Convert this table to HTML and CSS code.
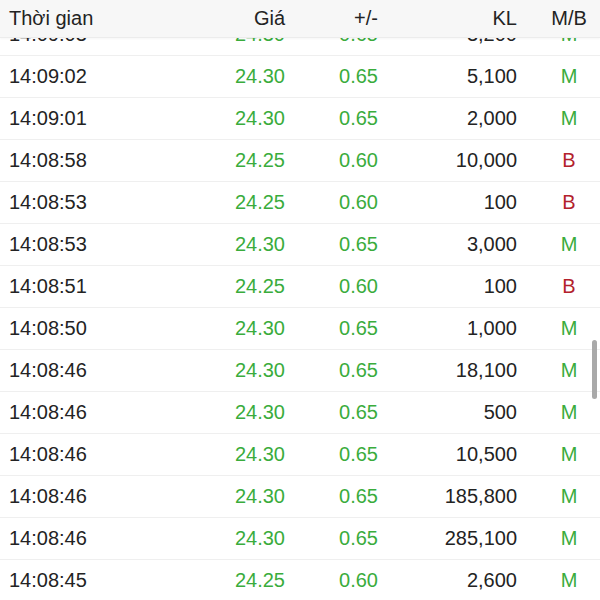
FILE: index.html
```html
<!DOCTYPE html>
<html lang="vi">
<head>
<meta charset="utf-8">
<link rel="stylesheet" href="styles.css">
</head>
<body>
<div class="table">
  <div class="header">
    <div class="c1">Thời gian</div>
    <div class="c2">Giá</div>
    <div class="c3">+/-</div>
    <div class="c4">KL</div>
    <div class="c5">M/B</div>
  </div>
  <div class="rows">
    <div class="row"><div class="c1">14:09:03</div><div class="c2 up">24.30</div><div class="c3 up">0.65</div><div class="c4">3,200</div><div class="c5 up">M</div></div>
    <div class="row"><div class="c1">14:09:02</div><div class="c2 up">24.30</div><div class="c3 up">0.65</div><div class="c4">5,100</div><div class="c5 up">M</div></div>
    <div class="row"><div class="c1">14:09:01</div><div class="c2 up">24.30</div><div class="c3 up">0.65</div><div class="c4">2,000</div><div class="c5 up">M</div></div>
    <div class="row"><div class="c1">14:08:58</div><div class="c2 up">24.25</div><div class="c3 up">0.60</div><div class="c4">10,000</div><div class="c5 down">B</div></div>
    <div class="row"><div class="c1">14:08:53</div><div class="c2 up">24.25</div><div class="c3 up">0.60</div><div class="c4">100</div><div class="c5 down">B</div></div>
    <div class="row"><div class="c1">14:08:53</div><div class="c2 up">24.30</div><div class="c3 up">0.65</div><div class="c4">3,000</div><div class="c5 up">M</div></div>
    <div class="row"><div class="c1">14:08:51</div><div class="c2 up">24.25</div><div class="c3 up">0.60</div><div class="c4">100</div><div class="c5 down">B</div></div>
    <div class="row"><div class="c1">14:08:50</div><div class="c2 up">24.30</div><div class="c3 up">0.65</div><div class="c4">1,000</div><div class="c5 up">M</div></div>
    <div class="row"><div class="c1">14:08:46</div><div class="c2 up">24.30</div><div class="c3 up">0.65</div><div class="c4">18,100</div><div class="c5 up">M</div></div>
    <div class="row"><div class="c1">14:08:46</div><div class="c2 up">24.30</div><div class="c3 up">0.65</div><div class="c4">500</div><div class="c5 up">M</div></div>
    <div class="row"><div class="c1">14:08:46</div><div class="c2 up">24.30</div><div class="c3 up">0.65</div><div class="c4">10,500</div><div class="c5 up">M</div></div>
    <div class="row"><div class="c1">14:08:46</div><div class="c2 up">24.30</div><div class="c3 up">0.65</div><div class="c4">185,800</div><div class="c5 up">M</div></div>
    <div class="row"><div class="c1">14:08:46</div><div class="c2 up">24.30</div><div class="c3 up">0.65</div><div class="c4">285,100</div><div class="c5 up">M</div></div>
    <div class="row"><div class="c1">14:08:45</div><div class="c2 up">24.25</div><div class="c3 up">0.60</div><div class="c4">2,600</div><div class="c5 up">M</div></div>
  </div>
  <div class="scrollbar"></div>
</div>
</body>
</html>
```
FILE: styles.css
```css
html, body {
  margin: 0;
  padding: 0;
  background: #ffffff;
}
body {
  width: 600px;
  height: 600px;
  overflow: hidden;
  font-family: "Liberation Sans", Arial, sans-serif;
  font-size: 20px;
  color: #232323;
}
.table {
  position: relative;
  width: 600px;
  height: 600px;
  overflow: hidden;
}
.header,
.row {
  display: grid;
  grid-template-columns: 191px 85px 93px 139px 1fr;
  align-items: center;
  padding-left: 9px;
}
.header {
  position: absolute;
  top: 0;
  left: 0;
  right: 0;
  height: 37px;
  background: #f7f7f7;
  border-bottom: 1px solid #ececec;
  box-shadow: 0 1px 2px rgba(0, 0, 0, 0.04);
  z-index: 2;
}
.rows {
  padding-top: 14px;
}
.row {
  height: 41px;
  border-bottom: 1px solid #efefef;
}
.c1 { text-align: left; }
.c2, .c3, .c4 { text-align: right; }
.c5 { text-align: center; padding-left: 21px; }
.up { color: #3aac3c; }
.down { color: #b3222c; }
.scrollbar {
  position: absolute;
  right: 3px;
  top: 340px;
  width: 5px;
  height: 59px;
  border-radius: 3px;
  background: #a9a9a9;
}
```
